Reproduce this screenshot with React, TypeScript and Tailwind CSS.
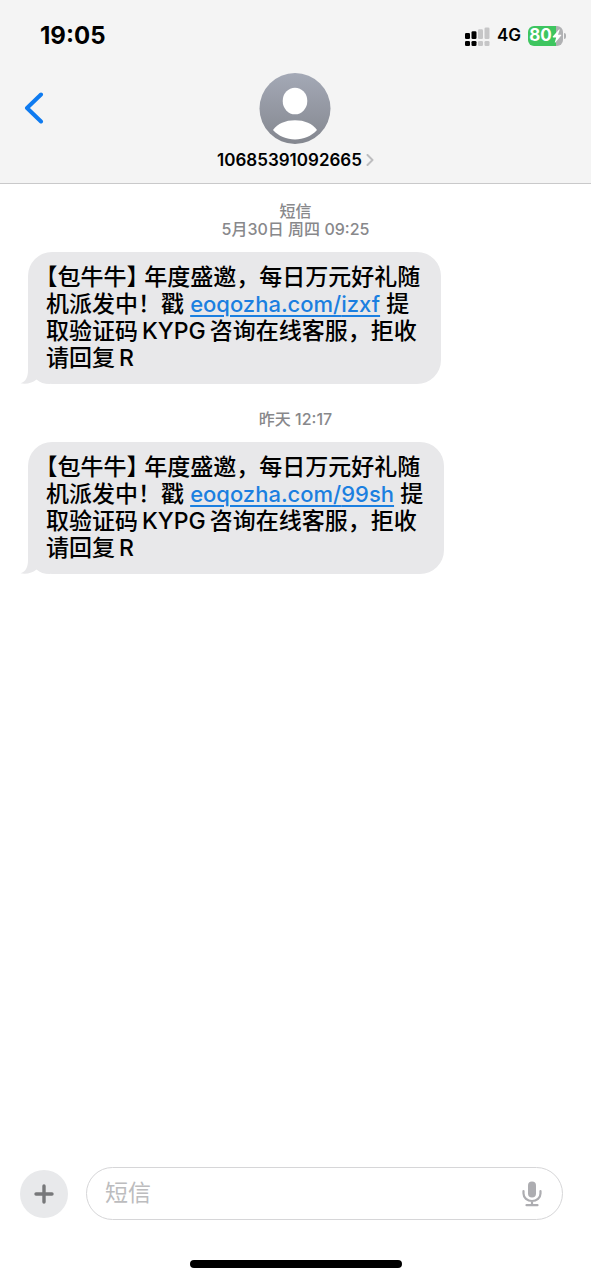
interface Message {
  id: number
  service?: string
  date: string
  code: string
}

const messages: Message[] = [
  { id: 1, service: '短信', date: '5月30日 周四 09:25', code: 'izxf' },
  { id: 2, date: '昨天 12:17', code: '99sh' },
]

function SignalIcon() {
  return (
    <svg width="25" height="19" viewBox="0 0 25 19" aria-label="信号">
      <g fill="#000">
        <rect x="0" y="6" width="5" height="6" rx="1.3" />
        <rect x="6.5" y="4.3" width="5" height="7.7" rx="1.3" />
        <rect x="0" y="14" width="5" height="5" rx="1.3" />
        <rect x="6.5" y="14" width="5" height="5" rx="1.3" />
      </g>
      <g fill="#c6c6c7">
        <rect x="13" y="2.3" width="5" height="9.7" rx="1.3" />
        <rect x="19.5" y="0.5" width="5" height="11.5" rx="1.3" />
        <rect x="13" y="14" width="5" height="5" rx="1.3" />
        <rect x="19.5" y="14" width="5" height="5" rx="1.3" />
      </g>
    </svg>
  )
}

function Battery() {
  return (
    <div className="flex items-center gap-px">
      <div className="flex h-5 w-[35px] items-center justify-center rounded-md bg-linear-to-r from-[#3ec55f] from-80% to-[#b0b1b3] to-80% text-[17px] font-bold text-white">
        80
        <svg width="10" height="14" viewBox="0 0 10 14" fill="currentColor" aria-hidden="true">
          <path d="M7 0.5 0.8 7.6c-.3.4-.1.8.4.8h3L2.8 13.3c-.1.5.3.6.6.3L9.2 6.5c.3-.4.1-.8-.4-.8H6L7.6.9C7.7.4 7.3.2 7 .5Z" />
        </svg>
      </div>
      <span className="h-1.5 w-0.5 rounded-r-full bg-[#b0b1b3]" />
    </div>
  )
}

function Avatar() {
  return (
    <svg width="72" height="72" viewBox="0 0 72 72" aria-hidden="true">
      <defs>
        <linearGradient id="avatar" x1="0" y1="0" x2="0" y2="1">
          <stop offset="0" stopColor="#a4a9b6" />
          <stop offset="1" stopColor="#84878f" />
        </linearGradient>
      </defs>
      <circle cx="36" cy="36.5" r="35.5" fill="url(#avatar)" />
      <ellipse cx="36" cy="29" rx="12.3" ry="13.3" fill="#fff" />
      <path d="M14 58C18.500 51.500 26.500 48.200 36 48.200s17.500 3.300 22 9.800C52.500 64 44.500 67.500 36 67.500s-16.500-3.500-22-9.500Z" fill="#fff" />
    </svg>
  )
}

function Header() {
  return (
    <header className="border-b border-[#c9c9ca] bg-[#f4f4f4]">
      <div className="flex h-18 items-center justify-between pr-[25px] pl-10">
        <time className="text-2xl font-bold">19:05</time>
        <div className="flex items-center gap-[7px]">
          <SignalIcon />
          <span className="text-[17px] font-semibold">4G</span>
          <Battery />
        </div>
      </div>
      <div className="grid grid-cols-[1fr_auto_1fr] items-start pb-[11px]">
        <button type="button" aria-label="返回" className="ml-6 flex h-18 w-10 items-center text-[#0f7bf0]">
          <svg width="20" height="32" viewBox="0 0 20 32" fill="none" stroke="currentColor" strokeWidth="4" strokeLinecap="round" strokeLinejoin="round">
            <path d="M17 2.500 3 16 17 29.500" />
          </svg>
        </button>
        <button type="button" className="flex flex-col items-center gap-1">
          <Avatar />
          <span className="flex items-center gap-1 text-[17px] leading-6 font-semibold">
            10685391092665
            <svg width="8" height="12" viewBox="0 0 8 12" fill="none" stroke="#bdbdbf" strokeWidth="2" strokeLinecap="round" strokeLinejoin="round">
              <path d="M1.500 1 6.500 6l-5 5" />
            </svg>
          </span>
        </button>
      </div>
    </header>
  )
}

function Bubble({ code }: { code: string }) {
  return (
    <div className="relative ml-7 w-fit rounded-3xl bg-[#e8e8ea] py-3 pr-[21px] pl-[18px] text-[23px] leading-[27px] font-medium whitespace-nowrap">
      <svg className="absolute bottom-0 -left-2" width="30" height="24" viewBox="0 0 30 24" fill="#e8e8ea" aria-hidden="true">
        <path d="M8 0V10C8 17 6 21.500 0.500 23.300 6 24.500 13 23 16.500 19.500 20 22.500 24 24 30 24V0Z" />
      </svg>
      <p className="relative">
        <span className="[font-feature-settings:'halt']">【包牛牛】</span> 年度盛邀，每日万元好礼随
        <br />
        机派发中！戳{' '}
        <a href={`https://eoqozha.com/${code}`} className="text-[22px] text-[#1b7fe0] underline decoration-2 underline-offset-3">
          eoqozha.com/{code}
        </a>{' '}
        提
        <br />
        取验证码<span className="mx-1">KYPG</span>咨询在线客服，拒收
        <br />
        请回复<span className="ml-1">R</span>
      </p>
    </div>
  )
}

function Composer() {
  return (
    <form className="flex items-center gap-[18px] pr-7 pl-5" onSubmit={(e) => e.preventDefault()}>
      <button type="button" aria-label="添加" className="flex size-12 shrink-0 items-center justify-center rounded-full bg-[#e8e9eb]">
        <svg width="20" height="20" viewBox="0 0 20 20" stroke="#77787a" strokeWidth="3.4" strokeLinecap="round">
          <path d="M10 2v16M2 10h16" />
        </svg>
      </button>
      <div className="flex h-[53px] min-w-0 flex-1 items-center rounded-full border border-[#d6d6d8] pr-5 pl-[18px]">
        <input
          type="text"
          aria-label="短信"
          placeholder="短信"
          className="min-w-0 flex-1 text-[23px] outline-none placeholder:text-[#bcbcbe]"
        />
        <button type="button" aria-label="听写">
          <svg width="20" height="26" viewBox="0 0 20 26" fill="none" stroke="#adadb1" strokeWidth="2.2" strokeLinecap="round">
            <rect x="6" y="0.5" width="8" height="16" rx="4" fill="#adadb1" stroke="none" />
            <path d="M1.500 10v2.500a8.500 7.500 0 0 0 17 0V10M10 20.500V24M4.500 24.200h11" />
          </svg>
        </button>
      </div>
    </form>
  )
}

export default function App() {
  return (
    <div className="flex min-h-screen flex-col bg-white font-[Inter,'Noto_Sans_CJK_SC',sans-serif] text-black">
      <Header />
      <main className="flex-1 pt-[18px]">
        {messages.map((message) => (
          <section key={message.id} className="mb-[26px]">
            <div className="mb-3.5 text-center text-base leading-[18px] font-medium text-[#88888b]">
              {message.service && <p>{message.service}</p>}
              <p>{message.date}</p>
            </div>
            <Bubble code={message.code} />
          </section>
        ))}
      </main>
      <footer>
        <Composer />
        <div className="mx-auto mt-10 mb-3 h-2 w-[212px] rounded-full bg-black" />
      </footer>
    </div>
  )
}
